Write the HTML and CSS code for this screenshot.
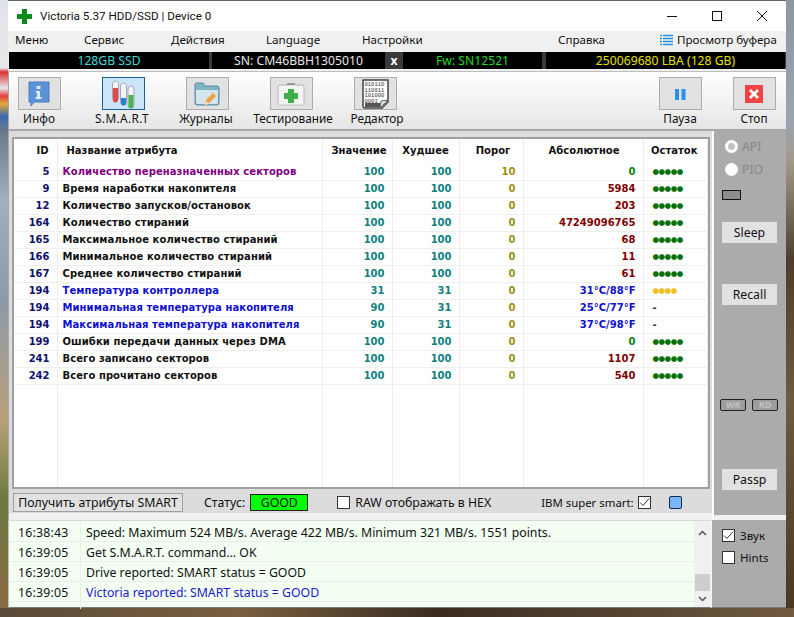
FILE: index.html
```html
<!DOCTYPE html>
<html lang="ru">
<head>
<meta charset="utf-8">
<title>Victoria 5.37</title>
<link rel="stylesheet" href="styles.css">
</head>
<body>
<div class="window">
  <header class="titlebar">
    <svg class="app-icon" width="15" height="15" viewBox="0 0 15 15"><path d="M5 0h5v5h5v5h-5v5H5v-5H0V5h5z" fill="#0a8a1e"/></svg>
    <span class="title">Victoria 5.37 HDD/SSD | Device 0</span>
    <div class="winctl">
      <svg width="12" height="12" viewBox="0 0 12 12"><path d="M1 6.5h10" stroke="#111" fill="none"/></svg>
      <svg width="12" height="12" viewBox="0 0 12 12"><rect x="1.5" y="1.5" width="9" height="9" stroke="#111" fill="none"/></svg>
      <svg width="12" height="12" viewBox="0 0 12 12"><path d="M1 1l10 10M11 1L1 11" stroke="#111" fill="none"/></svg>
    </div>
  </header>
  <nav class="menubar">
    <span class="m1">Меню</span><span class="m2">Сервис</span><span class="m3">Действия</span><span class="m4">Language</span><span class="m5">Настройки</span><span class="m6">Справка</span>
    <span class="m7"><svg width="13" height="13" viewBox="0 0 13 13"><path d="M0 1.5h2M3 1.5h10M0 4.5h2M3 4.5h10M0 7.5h2M3 7.5h10M0 10.5h2M3 10.5h10" stroke="#2b8fe0" stroke-width="1.4" fill="none"/></svg>Просмотр буфера</span>
  </nav>
  <div class="infobar">
    <div class="seg s1">128GB SSD</div>
    <div class="seg s2">SN: CM46BBH1305010</div>
    <div class="xbox">x</div>
    <div class="seg s3">Fw: SN12521</div>
    <div class="seg s4">250069680 LBA (128 GB)</div>
  </div>
  <div class="toolbar">
    <div class="tool">
      <div class="tbtn"><svg width="24" height="28" viewBox="0 0 24 28"><path d="M2 2h20v20H7l-3 4v-4H2z" fill="#5b93d8" stroke="#4a7fc0"/><rect x="9.5" y="6" width="4" height="3" fill="#dfeaf8"/><path d="M9 11h4v6h1.500v2h-6v-2H10v-4H9z" fill="#dfeaf8"/></svg></div>
      <span>Инфо</span>
    </div>
    <div class="tool">
      <div class="tbtn active"><svg width="24" height="30" viewBox="0 0 24 30"><rect x="1.500" y="2" width="6" height="20" rx="3" fill="#f4f4f4" stroke="#a8a8b8"/><path d="M2 9h5v12a2.500 2.500 0 0 1-5 0z" fill="#e0484a"/><rect x="9.500" y="4" width="6" height="22" rx="3" fill="#f4f4f4" stroke="#a8a8b8"/><path d="M10 19h5v5a2.500 2.500 0 0 1-5 0z" fill="#2f7fd0"/><rect x="17" y="7" width="6" height="22" rx="3" fill="#f4f4f4" stroke="#a8a8b8"/><path d="M17.500 16h5v11a2.500 2.500 0 0 1-5 0z" fill="#48b84e"/></svg></div>
      <span class="wide">S.M.A.R.T</span>
    </div>
    <div class="tool">
      <div class="tbtn"><svg width="26" height="26" viewBox="0 0 26 26"><path d="M1 4q0-2 2-2h6l2 3h12q2 0 2 2v15q0 2-2 2H3q-2 0-2-2z" fill="#7fb4c4" stroke="#5a8a9c"/><path d="M2 9h22v12q0 2-2 2H4q-2 0-2-2z" fill="#d4e6ec"/><path d="M11 24l1-5 7-7 3 3-7 7z" fill="#f0a040"/><path d="M11 24l1-4 3 3z" fill="#fbe2b8"/></svg></div>
      <span class="nudge-left">Журналы</span>
    </div>
    <div class="tool">
      <div class="tbtn"><svg width="30" height="26" viewBox="0 0 30 26"><rect x="2" y="5" width="26" height="19" fill="#f4f4f4"/><path d="M2 23V6q0-2 2-2h7M19 4h7q2 0 2 2v17" fill="none" stroke="#b8b8b8"/><path d="M11 3h8" stroke="#777" stroke-width="1.400"/><path d="M1 24h28" stroke="#c4c4c4"/><path d="M12 8h6v4h4v6h-4v4h-6v-4H8v-6h4z" fill="#3bb04a"/></svg></div>
      <span class="nudge-right">Тестирование</span>
    </div>
    <div class="tool">
      <div class="tbtn"><svg width="30" height="30" viewBox="0 0 30 30"><path d="M3 1h25v22l-6 6H5q-2 0-2-2z" fill="#fff" stroke="#444" stroke-width="1.500"/><path d="M5 24h16l-1 4H5z" fill="#555"/><path d="M28 21l-7 1-1 7z" fill="#ddd" stroke="#666"/><text class="bits" x="4.500" y="7">010110</text><text class="bits" x="4.500" y="12.500">110011</text><text class="bits" x="4.500" y="18">101000</text><text class="bits" x="4.500" y="23.500">0001</text></svg></div>
      <span class="nudge-right">Редактор</span>
    </div>
    <div class="tool right">
      <div class="tbtn"><svg width="12" height="12" viewBox="0 0 12 12"><path d="M1 1h4v11H1zM7.500 1h4v11h-4z" fill="#2b8ff0"/></svg></div>
      <span>Пауза</span>
    </div>
    <div class="tool stop">
      <div class="tbtn"><svg width="18" height="18" viewBox="0 0 18 18"><rect width="18" height="18" fill="#ee4444"/><path d="M5 5l8 8M13 5l-8 8" stroke="#fff" stroke-width="2.600" fill="none"/></svg></div>
      <span>Стоп</span>
    </div>
  </div>
  <div class="middle">
    <main class="smart">
      <div class="tablewrap">
        <table class="attrs">
          <colgroup><col class="c-id"><col class="c-name"><col class="c-val"><col class="c-worst"><col class="c-thr"><col class="c-abs"><col class="c-rest"></colgroup>
          <thead><tr><th class="id">ID</th><th class="name">Название атрибута</th><th class="hv">Значение</th><th>Худшее</th><th class="hv">Порог</th><th class="ha">Абсолютное</th><th class="hr">Остаток</th></tr></thead>
          <tbody>
            <tr class="purple"><td class="id">5</td><td class="name">Количество переназначенных секторов</td><td class="val">100</td><td class="val">100</td><td class="thr">10</td><td class="abs ok">0</td><td class="rest">●●●●●</td></tr>
            <tr><td class="id">9</td><td class="name">Время наработки накопителя</td><td class="val">100</td><td class="val">100</td><td class="thr">0</td><td class="abs">5984</td><td class="rest">●●●●●</td></tr>
            <tr><td class="id">12</td><td class="name">Количество запусков/остановок</td><td class="val">100</td><td class="val">100</td><td class="thr">0</td><td class="abs">203</td><td class="rest">●●●●●</td></tr>
            <tr><td class="id">164</td><td class="name">Количество стираний</td><td class="val">100</td><td class="val">100</td><td class="thr">0</td><td class="abs">47249096765</td><td class="rest">●●●●●</td></tr>
            <tr><td class="id">165</td><td class="name">Максимальное количество стираний</td><td class="val">100</td><td class="val">100</td><td class="thr">0</td><td class="abs">68</td><td class="rest">●●●●●</td></tr>
            <tr><td class="id">166</td><td class="name">Минимальное количество стираний</td><td class="val">100</td><td class="val">100</td><td class="thr">0</td><td class="abs">11</td><td class="rest">●●●●●</td></tr>
            <tr><td class="id">167</td><td class="name">Среднее количество стираний</td><td class="val">100</td><td class="val">100</td><td class="thr">0</td><td class="abs">61</td><td class="rest">●●●●●</td></tr>
            <tr class="blue"><td class="id">194</td><td class="name">Температура контроллера</td><td class="val">31</td><td class="val">31</td><td class="thr">0</td><td class="abs temp">31°C/88°F</td><td class="rest warn">●●●●</td></tr>
            <tr class="blue"><td class="id">194</td><td class="name">Минимальная температура накопителя</td><td class="val">90</td><td class="val">31</td><td class="thr">0</td><td class="abs temp">25°C/77°F</td><td class="rest none">-</td></tr>
            <tr class="blue"><td class="id">194</td><td class="name">Максимальная температура накопителя</td><td class="val">90</td><td class="val">31</td><td class="thr">0</td><td class="abs temp">37°C/98°F</td><td class="rest none">-</td></tr>
            <tr><td class="id">199</td><td class="name">Ошибки передачи данных через DMA</td><td class="val">100</td><td class="val">100</td><td class="thr">0</td><td class="abs ok">0</td><td class="rest">●●●●●</td></tr>
            <tr><td class="id">241</td><td class="name">Всего записано секторов</td><td class="val">100</td><td class="val">100</td><td class="thr">0</td><td class="abs">1107</td><td class="rest">●●●●●</td></tr>
            <tr><td class="id">242</td><td class="name">Всего прочитано секторов</td><td class="val">100</td><td class="val">100</td><td class="thr">0</td><td class="abs">540</td><td class="rest">●●●●●</td></tr>
            <tr class="filler"><td></td><td></td><td></td><td></td><td></td><td></td><td></td></tr>
          </tbody>
        </table>
      </div>
      <div class="statusbar">
        <button class="getbtn">Получить атрибуты SMART</button>
        <span class="st-label">Статус:</span>
        <span class="good">GOOD</span>
        <span class="check raw"><i class="box"></i>RAW отображать в HEX</span>
        <span class="ibm">IBM super smart:</span>
        <i class="box on"><svg width="11" height="11" viewBox="0 0 11 11"><path d="M1 5.500l3 3 6-7" stroke="#333" fill="none"/></svg></i>
        <i class="bluebox"></i>
      </div>
    </main>
    <aside class="side">
      <label class="radio dis"><i class="rd gray"></i>API</label>
      <label class="radio dis"><i class="rd"></i>PIO</label>
      <i class="led"></i>
      <button class="sbtn sleep">Sleep</button>
      <button class="sbtn recall">Recall</button>
      <div class="wrrd"><b>WR</b><b>RD</b></div>
      <button class="sbtn passp">Passp</button>
    </aside>
  </div>
  <div class="bottom">
    <div class="log">
      <div class="logrows">
        <div class="row"><span class="time">16:38:43</span><span class="msg">Speed: Maximum 524 MB/s. Average 422 MB/s. Minimum 321 MB/s. 1551 points.</span></div>
        <div class="row"><span class="time">16:39:05</span><span class="msg">Get S.M.A.R.T. command... OK</span></div>
        <div class="row"><span class="time">16:39:05</span><span class="msg">Drive reported: SMART status = GOOD</span></div>
        <div class="row"><span class="time">16:39:05</span><span class="msg vic">Victoria reported: SMART status = GOOD</span></div>
        <div class="row last"><span class="time"></span><span class="msg"></span></div>
      </div>
      <div class="scroll">
        <svg width="9" height="6" viewBox="0 0 9 6"><path d="M1 5l3.500-3.500L8 5" stroke="#555" stroke-width="1.500" fill="none"/></svg>
        <i class="thumb"></i>
        <svg width="9" height="6" viewBox="0 0 9 6"><path d="M1 1l3.500 3.500L8 1" stroke="#555" stroke-width="1.500" fill="none"/></svg>
      </div>
    </div>
    <div class="opts">
      <span class="check"><i class="box on"><svg width="11" height="11" viewBox="0 0 11 11"><path d="M1 5.500l3 3 6-7" stroke="#333" fill="none"/></svg></i>Звук</span>
      <span class="check"><i class="box"></i>Hints</span>
    </div>
  </div>
</div>
</body>
</html>
```
FILE: styles.css
```css
* { box-sizing: border-box; }
html, body { margin: 0; height: 617px; overflow: hidden; }
body {
  padding-left: 8px;
  font-family: "Noto Sans", sans-serif;
  font-size: 12.3px;
  color: #111;
  background:
    linear-gradient(90deg, #5a4a38 0, #7a6040 30%, #3a2c20 55%, #705a40 100%) 0 608px / 100% 9px no-repeat,
    linear-gradient(180deg, #8c97a6 0, #9aa5b2 120px, #a39a88 160px, #4e3d2c 260px, #6d5a42 400px, #4a3826 608px) right top / 8px 608px no-repeat,
    linear-gradient(180deg, #dfe3e8 0, #e8e8ea 68px, #d83030 72px, #e8e8ea 88px, #e04040 96px, #e2a838 104px, #3c6bb0 116px, #6a7a88 132px, #9fb0c0 200px, #8c9aa8 300px, #b8a078 420px, #6c7a40 500px, #8a6a40 608px) left top / 8px 608px no-repeat,
    #5a4a38;
}
.window {
  width: 778px;
  height: 608px;
  display: flex;
  flex-direction: column;
  background: #f0f0f0;
  border-top: 1px solid #5f656e;
}

/* title bar */
.titlebar { height: 30px; background: #fff; display: flex; align-items: center; padding-left: 9px; flex: none; }
.app-icon { margin-right: 8px; }
.title { font-family: Roboto, sans-serif; font-size: 11.7px; }
.winctl { margin-left: auto; display: flex; gap: 33px; margin-right: 18px; }
.winctl svg { display: block; margin-top: -1px; }

/* menu */
.menubar { height: 21px; flex: none; background: #f0f0f0; position: relative; font-size: 11.6px; }
.menubar span { position: absolute; top: 0; line-height: 18px; white-space: nowrap; }
.m1 { left: 7px; } .m2 { left: 76px; } .m3 { left: 163px; } .m4 { left: 258px; } .m5 { left: 354px; } .m6 { left: 550px; }
.m7 { left: 652px; display: flex; align-items: center; gap: 4px; }

/* black bar */
.infobar { height: 17px; flex: none; display: flex; background: #3a3a3a; font-size: 12.2px; line-height: 17px; margin-left: 1px; }
.seg { background: #000; text-align: center; }
.s1 { width: 200px; margin-right: 3px; color: #3fd8d8; }
.s2 { width: 173px; color: #e8e8e8; }
.xbox { width: 18px; text-align: center; color: #fff; font-weight: 700; }
.s3 { width: 139px; margin-right: 4px; color: #22dd22; }
.s4 { width: 239px; color: #e8e000; }

/* toolbar */
.toolbar {
  height: 60px; flex: none; margin-top: 2px;
  display: flex; gap: 24px; padding: 5px 0 0 0;
  background: linear-gradient(180deg, #fff 0, #e6e6e6 100%);
  border-top: 1px solid #bdbdbd;
  border-bottom: 2px solid #a8a8a8;
  border-left: 1px solid #a8a8a8;
}
.tool { width: 60px; display: flex; flex-direction: column; align-items: center; white-space: nowrap; }
.tool span { font-size: 11.8px; line-height: 15px; margin-top: 1px; }
.tool .wide { letter-spacing: 0.4px; margin-right: 2px; }
.tool .nudge-left { margin-right: 2px; }
.tool .nudge-right { margin-left: 4px; }
.tool.right { margin-left: auto; }
.tool.stop { margin-left: -10px; margin-right: 2px; }
.tbtn { width: 43px; height: 33px; background: #e1e1e1; border: 1px solid #adadad; display: flex; align-items: center; justify-content: center; }
.tbtn.active { background: #cce4f7; border-color: #1a5f96; }
.bits { font-family: "Liberation Mono", monospace; font-size: 5.500px; fill: #333; }

/* middle */
.middle { flex: none; height: 389px; display: flex; background: #f0f0f0; }
.smart { width: 706px; background: #dcdcdc; display: flex; flex-direction: column; border-left: 1px solid #a8a8a8; border-right: 2px solid #fff; }
.tablewrap { height: 352px; margin: 6px 2px 0 3px; border: 2px solid #a0a0a0; background: #fff; flex: none; }
.attrs { width: 100%; height: 100%; table-layout: fixed; border-collapse: collapse; font-family: "DejaVu Sans", sans-serif; font-size: 10px; font-weight: 700; }
.c-id { width: 43px; } .c-name { width: 265px; } .c-val { width: 70px; } .c-worst { width: 67px; } .c-thr { width: 64px; } .c-abs { width: 120px; }
.attrs th { height: 24px; font-size: 10px; color: #111; text-align: center; padding: 0 0 2px; border-right: 1px solid #ececec; background: #fff; }
.attrs th.id { text-align: right; padding-right: 8px; }
.attrs th.name { text-align: left; padding-left: 9px; }
.attrs th.hv { padding-left: 4px; }
.attrs th.ha { padding-left: 2px; }
.attrs th.hr { padding-left: 0; padding-right: 2px; }
.attrs td { height: 17px; padding: 0 7px 0 0; text-align: right; border-right: 1px solid #ececec; border-bottom: 1px solid #efefef; white-space: nowrap; overflow: hidden; }
.attrs td.id { color: #10106e; }
.attrs td.name { text-align: left; padding-left: 5px; color: #111; letter-spacing: 0.08px; }
.purple td.name { color: #800080; }
.blue td.name { color: #1010d0; }
.val { color: #108080; }
.thr { color: #989010; }
.abs { color: #800000; }
.abs.ok { color: #108010; }
.abs.temp { color: #1010d0; }
.attrs td.rest { text-align: left; padding-left: 9px; color: #087008; font-size: 7.500px; letter-spacing: -0.500px; }
.attrs td.warn { color: #f0c020; }
.attrs td.none { color: #333; font-size: 10px; }
.filler td { height: auto; border-bottom: 0; }

.statusbar { flex: 1; display: flex; align-items: center; padding: 3px 0 0 4px; border-bottom: 7px solid #f0f0f0; }
.getbtn { width: 170px; height: 19px; padding: 0; background: #e1e1e1; border: 1px solid #a0a0a0; font: inherit; color: #111; }
.st-label { margin-left: 21px; }
.good { width: 58px; height: 17px; margin-left: 5px; background: #00ff00; border: 1px solid #222; text-align: center; line-height: 15px; }
.box { width: 13px; height: 13px; background: #fff; border: 1px solid #333; display: inline-block; flex: none; }
.box svg { display: block; margin: 0; }
.check { display: flex; align-items: center; gap: 5px; white-space: nowrap; }
.raw { margin-left: 29px; }
.ibm { margin-left: 50px; margin-right: 4px; white-space: nowrap; font-size: 11.4px; }
.bluebox { width: 13px; height: 13px; margin-left: 18px; background: #7ab6ff; border: 1px solid #1a2a4a; border-radius: 2px; }

/* side */
.side { flex: 1; background: #ababab; display: flex; flex-direction: column; align-items: flex-start; padding: 4px 0 0 8px; border-bottom: 5px solid #f0f0f0; }
.radio { display: flex; align-items: center; gap: 4px; height: 23px; color: #888; margin-left: 3px; }
.rd { width: 13px; height: 13px; border-radius: 50%; background: #fff; }
.rd.gray { background: radial-gradient(circle, #c0c0c0 0 3px, #fff 4px); }
.led { width: 19px; height: 10px; margin-top: 9px; background: #8e8e8e; border: 1px solid #111; }
.sbtn { width: 55px; height: 21px; padding: 0; border: 0; background: #e1e1e1; font: inherit; color: #111; }
.sleep { margin-top: 22px; }
.recall { margin-top: 41px; }
.wrrd { display: flex; gap: 6px; margin: 94px 0 0 -2px; }
.wrrd b { width: 26px; height: 12px; border: 1px solid #222; border-radius: 2px; font-size: 9px; line-height: 10px; text-align: center; color: #c2c2c2; background: #9e9e9e; }
.passp { margin-top: 58px; }

/* log */
.bottom { flex: 1; display: flex; min-height: 0; }
.log { width: 704px; background: #f2fff2; display: flex; border-left: 1px solid #bdbdbd; border-top: 1px solid #d8d8d8; border-bottom: 1px solid #777; border-right: 2px solid #f4f4f4; }
.logrows { flex: 1; padding-top: 1px; }
.row { height: 20px; display: flex; border-bottom: 1px solid #e4f2e4; line-height: 22px; }
.row.last { height: 7px; border-bottom: 0; }
.time { width: 72px; padding-left: 9px; border-right: 1px solid #e4f2e4; flex: none; letter-spacing: 0.2px; }
.msg { padding-left: 5px; white-space: nowrap; }
.vic { color: #1a1ad0; }
.scroll { width: 16px; background: #f0f0f0; display: flex; flex-direction: column; align-items: center; padding-top: 9px; }
.thumb { width: 15px; height: 17px; background: #cdcdcd; margin-top: 38px; }
.scroll svg:last-child { margin-top: 5px; }
.opts { flex: 1; background: #ababab; padding: 8px 0 0 10px; display: flex; flex-direction: column; gap: 7px; border-bottom: 1px solid #777; font-size: 11.6px; }
```
